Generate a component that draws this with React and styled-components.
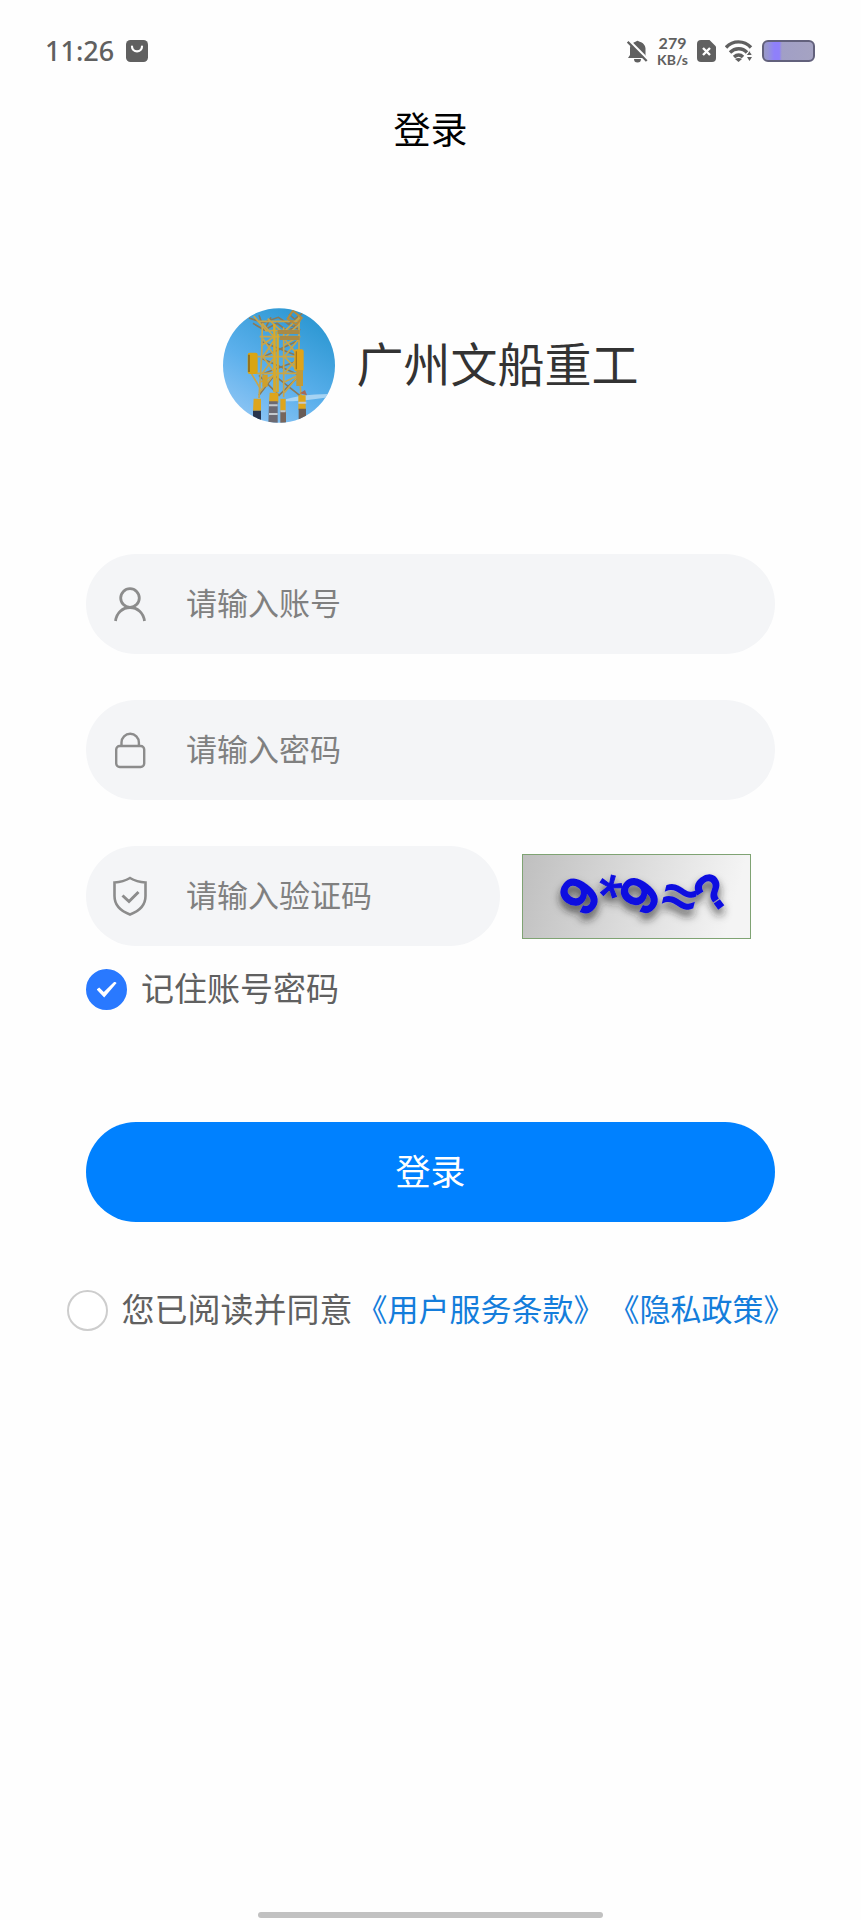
import React, {useState} from 'react';
import styled, {createGlobalStyle} from "styled-components";

const GlobalStyle = createGlobalStyle`
  * {
    box-sizing: border-box;
  }

  body {
    margin: 0;
    background-color: #fefefe;
    font-family: "Liberation Sans", "Noto Sans CJK SC", sans-serif;
  }

  input, button {
    font-family: inherit;
  }
`;

const Page = styled.div`
  display: flex;
  flex-direction: column;
  min-height: 100vh;
`;

const StatusBar = styled.div`
  display: flex;
  align-items: center;
  justify-content: space-between;
  height: 80px;
  padding: 22px 46px 0 45px;
  color: #606060;
`;

const StatusGroup = styled.div`
  display: flex;
  align-items: center;
  gap: ${props => props.$gap}px;
`;

const Clock = styled.span`
  font-family: "Noto Sans", sans-serif;
  font-size: 27px;
  font-weight: 500;
  line-height: 28px;
`;

const NetSpeed = styled.div`
  display: flex;
  flex-direction: column;
  align-items: center;
  font-family: Lato, sans-serif;
  font-weight: 700;
`;

const SpeedText = styled.span`
  font-size: ${props => props.$size}px;
  line-height: 17px;
`;

const NavBar = styled.header`
  display: flex;
  align-items: center;
  justify-content: center;
  height: 104px;
`;

const NavTitle = styled.h1`
  margin: 0;
  font-size: 37px;
  font-weight: 400;
  line-height: 48px;
  color: #000;
`;

const Brand = styled.div`
  display: flex;
  align-items: center;
  justify-content: center;
  gap: 22px;
  margin-top: 124px;
`;

const BrandName = styled.h2`
  margin: 0;
  font-size: 47px;
  font-weight: 400;
  line-height: 64px;
  color: #333;
`;

const LoginForm = styled.form`
  display: flex;
  flex-direction: column;
  margin-top: 131px;
  padding: 0 10%;
`;

const Fields = styled.div`
  display: flex;
  flex-direction: column;
  gap: 46px;
`;

const CaptchaRow = styled.div`
  display: flex;
  align-items: center;
  gap: 22px;
  padding-right: 24px;
`;

const Field = styled.label`
  display: flex;
  flex: 1;
  align-items: center;
  gap: 36px;
  min-width: 0;
  padding: 0 24px;
  border-radius: 50px;
  background-color: #f4f5f7;
  color: #8c8c8c;

  svg {
    flex: none;
  }
`;

const FieldInput = styled.input`
  flex: 1;
  min-width: 0;
  height: 100px;
  padding: 2px 0 0;
  border: none;
  outline: none;
  background: transparent;
  font-size: 31px;
  line-height: 48px;
  color: #333;

  &::placeholder {
    color: #808080;
    line-height: 48px;
    opacity: 1;
  }
`;

const CaptchaButton = styled.button`
  display: flex;
  flex: none;
  width: 229px;
  height: 85px;
  padding: 0;
  border: 1px solid #7fa373;
  background: linear-gradient(105deg, #bfbfbf, #dadada 45%, #f4f4f4 90%);
  cursor: pointer;
`;

const CheckLabel = styled.label`
  display: flex;
  align-items: center;
  gap: 14px;
  font-size: 33px;
  line-height: 41px;
  color: #606060;
`;

const RoundCheckbox = styled.input`
  appearance: none;
  display: grid;
  place-content: center;
  flex: none;
  width: 41px;
  height: 41px;
  margin: 0;
  border: 2px solid #cdcdcd;
  border-radius: 50%;
  background-color: #fff;

  &:checked {
    border-color: #2979ff;
    background-color: #2979ff;
  }

  &:checked::before {
    content: "";
    width: 20px;
    height: 16px;
    background-color: #fff;
    clip-path: polygon(0 50%, 13% 38%, 36% 66%, 90% 0, 100% 10%, 38% 100%);
  }
`;

const Remember = styled.div`
  display: flex;
  margin-top: 23px;
`;

const SubmitButton = styled.button`
  height: 100px;
  margin-top: 112px;
  padding: 2px 0 0;
  border: none;
  border-radius: 50px;
  background-color: #0081ff;
  font-size: 35px;
  line-height: 48px;
  color: #fff;
  cursor: pointer;
`;

const Agreement = styled.div`
  display: flex;
  align-items: center;
  justify-content: center;
  gap: 4px;
  margin-top: 68px;
  white-space: nowrap;
`;

const AgreementLink = styled.a`
  font-size: 31px;
  line-height: 41px;
  color: #147ddb;
  text-decoration: none;
`;

const HomeIndicator = styled.div`
  width: 40%;
  height: 6px;
  margin: auto auto 2px;
  border-radius: 3px;
  background-color: #c1c1c1;
`;

const BagIcon = () => (
  <svg width="22" height="22" viewBox="0 0 22 22">
    <rect width="22" height="22" rx="4.5" fill="#606060"/>
    <path d="M6 6.5a5 4.8 0 0 0 10 0" fill="none" stroke="#fff" strokeWidth="2.2" strokeLinecap="round"/>
  </svg>
);

const MutedBellIcon = () => (
  <svg width="21" height="23" viewBox="0 0 21 23">
    <path d="M9 1.5a2 2 0 0 1 3 0c4 1 6.500 4 6.500 7v6.500l1.500 3H1l2-3V8c0-3 3-5.500 6-6.500zM7 19h7a3.500 3.500 0 0 1-7 0z" fill="#606060"/>
    <path d="M1.5 0 21 19.5" stroke="#fefefe" strokeWidth="2.6"/>
    <path d="M.7 1.8 19.7 21" stroke="#606060" strokeWidth="2.2"/>
  </svg>
);

const SimIcon = () => (
  <svg width="19" height="22" viewBox="0 0 19 22">
    <path d="M4 0h8.500L19 6.500V18a4 4 0 0 1-4 4H4a4 4 0 0 1-4-4V4a4 4 0 0 1 4-4z" fill="#606060"/>
    <path d="m6 8 7 7m0-7-7 7" stroke="#fff" strokeWidth="2.4"/>
  </svg>
);

const WifiIcon = () => (
  <svg width="28" height="22" viewBox="0 0 28 22">
    <g fill="none" stroke="#606060" strokeWidth="3.4">
      <path d="M1 7.5C8 0 19 0 26 7.500"/>
      <path d="M5 12.5c5-5 12.500-5 17 0"/>
      <path d="M9 17c3-2.600 6.500-2.600 9 0"/>
    </g>
    <path d="M10 19c2-1.500 5-1.500 7 0l-3.500 3z" fill="#606060"/>
    <path d="m21 15.500 3.500-5 3 5z" fill="#606060" stroke="#fefefe"/>
    <path d="M22 17h5l-2.500 4z" fill="#606060"/>
  </svg>
);

const BatteryIcon = () => (
  <svg width="53" height="22" viewBox="0 0 53 22">
    <defs>
      <linearGradient id="charge">
        <stop offset="0" stopColor="#9a99c4"/>
        <stop offset=".1" stopColor="#9694d6"/>
        <stop offset=".22" stopColor="#8f80fa"/>
        <stop offset=".32" stopColor="#8f80fa"/>
        <stop offset=".37" stopColor="#a19fc6"/>
        <stop offset="1" stopColor="#a5a3c2"/>
      </linearGradient>
    </defs>
    <rect x="1" y="1" width="51" height="20" rx="5" fill="url(#charge)" stroke="#62617c" strokeWidth="2"/>
  </svg>
);

const UserIcon = () => (
  <svg width="40" height="40" viewBox="0 0 40 40" fill="none" stroke="currentColor" strokeWidth="2.8">
    <circle cx="20" cy="14" r="9.3"/>
    <path d="M5.5 37c1-8 7-13.500 14.500-13.500S33.500 29 34.500 37"/>
  </svg>
);

const LockIcon = () => (
  <svg width="40" height="40" viewBox="0 0 40 40" fill="none" stroke="currentColor" strokeWidth="2.4">
    <rect x="6.2" y="16" width="28" height="21" rx="3.5"/>
    <path d="M11.5 16v-3.500a8.700 8.700 0 0 1 17.400 0V16"/>
  </svg>
);

const ShieldIcon = () => (
  <svg width="40" height="40" viewBox="0 0 40 40" fill="none" stroke="currentColor" strokeWidth="2.6">
    <path d="M20 2c-5 3-10 4.200-15.500 4.500V20c0 9 6 15 15.500 18.500C29.500 35 35.500 29 35.500 20V6.500C30 6.200 25 5 20 2z"/>
    <path d="m12.500 19.500 6.500 6L28.500 16" strokeWidth="3"/>
  </svg>
);

// offshore jacket platform against a blue sky
const BrandLogo = () => (
  <svg width="112" height="115" viewBox="42 38 336 345">
    <defs>
      <linearGradient id="sky" x1="0" y1="1" x2=".6" y2="0">
        <stop offset="0" stopColor="#9ccbf6"/>
        <stop offset=".5" stopColor="#5cb0ec"/>
        <stop offset="1" stopColor="#2f99d4"/>
      </linearGradient>
      <clipPath id="round">
        <ellipse cx="210" cy="210.5" rx="168" ry="172"/>
      </clipPath>
    </defs>
    <g clipPath="url(#round)">
      <rect x="42" y="38" width="336" height="345" fill="url(#sky)"/>
      <path d="M230 312c50-16 90-14 150-18v10c-50 4-90 14-150 14z" fill="#b9dcf5" opacity=".8"/>
      <path d="M42 290c30 50 60 60 100 93H42z" fill="#a9d3f7" opacity=".6"/>
      <g fill="none" stroke="#8a7a58" strokeWidth="5">
        <path d="M120 68l42 14 46-16 30 20 42-32M132 84l34 20 38-20 34 24 34-28M150 60l16 44M186 66l-20 38M240 56l32 30M236 86l38 18"/>
        <path d="M160 140l112 44M272 134l-112 52M160 236l112-42M160 190l112 50M150 300l46-60 76 60M150 240l60 60 62-60"/>
      </g>
      <g fill="none" stroke="#c9a548" strokeWidth="5">
        <path d="M160 84l-2 100-8 124M196 90l4 206M224 96v210M270 60v130l6 120"/>
        <path d="M152 124h122M146 184h130M142 234h134M134 62l40 46M146 78h128M168 106h104M176 70l46 42 52-48"/>
        <path d="M162 130l36 54-38 50M198 130l-36 54 36 50M226 130l44 54-44 50M270 130l-44 54 48 50M128 236l26 44M196 236l-44 54M226 292l48-58"/>
        <path d="M160 84l38 44M272 84l-46 44M158 150l40-28M224 150l48-28M154 260l42-20M226 260l46-22"/>
      </g>
      <path d="M196 86v204M206 110v180" stroke="#d9aa29" strokeWidth="7"/>
      <path d="M206 104h66v12h-66zM212 122h60v12h-60z" fill="#a98a45"/>
      <path d="M236 70l16-24 26 22-16 20z" fill="none" stroke="#b68b3b" strokeWidth="6"/>
      <rect x="116" y="172" width="30" height="64" rx="6" fill="#d9a514"/>
      <path d="M120 178v52" stroke="#8d6b1c" strokeWidth="5"/>
      <rect x="256" y="162" width="28" height="66" rx="6" fill="#e0a41a"/>
      <path d="M262 168v54" stroke="#a3761a" strokeWidth="4"/>
      <path d="M262 224h20v48h-20z" fill="#c39a35"/>
      <path d="M160 238h16v36h-16z" fill="#d0a02a"/>
      <path d="M134 310h22v36h-24zM182 292h26v30h-28zM214 310h16v36h-16zM268 300h22v44h-22z" fill="#dda51c"/>
      <path d="M132 346h24v40h-24z" fill="#28344c"/>
      <path d="M180 318h26v68h-28z" fill="#6c6a72"/>
      <path d="M214 346h17v40h-17z" fill="#77655c"/>
      <path d="M269 340h22v44h-22z" fill="#695c56"/>
      <path d="M180 330h26M180 356h26M214 348h16M268 322h24" stroke="#c4c9cd" strokeWidth="6"/>
      <path d="M272 294l16-10 6 16z" fill="#a96a55"/>
    </g>
  </svg>
);

const CaptchaImage = () => (
  <svg width="227" height="83" viewBox="0 0 227 83">
    <defs>
      <filter id="shade" x="-20%" y="-20%" width="150%" height="170%">
        <feDropShadow dx="0" dy="6" stdDeviation="4" floodColor="#222" floodOpacity=".8"/>
      </filter>
    </defs>
    <g
      filter="url(#shade)"
      fill="#1010e0"
      stroke="#1010e0"
      strokeWidth="3"
      textAnchor="middle"
      fontFamily="Liberation Sans, sans-serif"
      fontSize="52"
    >
      <text transform="translate(71 51) rotate(-54)">9</text>
      <text transform="translate(80 62) rotate(14)" fontSize="62" strokeWidth="1">*</text>
      <text transform="translate(131 51) rotate(-52)">9</text>
      <text transform="translate(152 61) rotate(14)" fontSize="60" strokeWidth="2">≈</text>
      <text transform="translate(198 51) rotate(-36)" fontSize="48">?</text>
    </g>
  </svg>
);

const App = () => {
  const [remember, setRemember] = useState(true);
  const [agreed, setAgreed] = useState(false);

  return (
    <Page>
      <GlobalStyle/>
      <StatusBar>
        <StatusGroup $gap={12}>
          <Clock>11:26</Clock>
          <BagIcon/>
        </StatusGroup>
        <StatusGroup $gap={9}>
          <MutedBellIcon/>
          <NetSpeed>
            <SpeedText $size={16}>279</SpeedText>
            <SpeedText $size={14}>KB/s</SpeedText>
          </NetSpeed>
          <SimIcon/>
          <WifiIcon/>
          <BatteryIcon/>
        </StatusGroup>
      </StatusBar>

      <NavBar>
        <NavTitle>登录</NavTitle>
      </NavBar>

      <Brand>
        <BrandLogo/>
        <BrandName>广州文船重工</BrandName>
      </Brand>

      <LoginForm onSubmit={e => e.preventDefault()}>
        <Fields>
          <Field>
            <UserIcon/>
            <FieldInput type="text" aria-label="账号" placeholder="请输入账号"/>
          </Field>
          <Field>
            <LockIcon/>
            <FieldInput type="password" aria-label="密码" placeholder="请输入密码"/>
          </Field>
          <CaptchaRow>
            <Field>
              <ShieldIcon/>
              <FieldInput type="text" aria-label="验证码" placeholder="请输入验证码"/>
            </Field>
            <CaptchaButton type="button" aria-label="刷新验证码">
              <CaptchaImage/>
            </CaptchaButton>
          </CaptchaRow>
        </Fields>

        <Remember>
          <CheckLabel>
            <RoundCheckbox type="checkbox" checked={remember} onChange={e => setRemember(e.target.checked)}/>
            记住账号密码
          </CheckLabel>
        </Remember>

        <SubmitButton type="submit">登录</SubmitButton>

        <Agreement>
          <CheckLabel>
            <RoundCheckbox type="checkbox" checked={agreed} onChange={e => setAgreed(e.target.checked)}/>
            您已阅读并同意
          </CheckLabel>
          <AgreementLink href="#terms">《用户服务条款》</AgreementLink>
          <AgreementLink href="#privacy">《隐私政策》</AgreementLink>
        </Agreement>
      </LoginForm>

      <HomeIndicator/>
    </Page>
  );
};

export default App;
